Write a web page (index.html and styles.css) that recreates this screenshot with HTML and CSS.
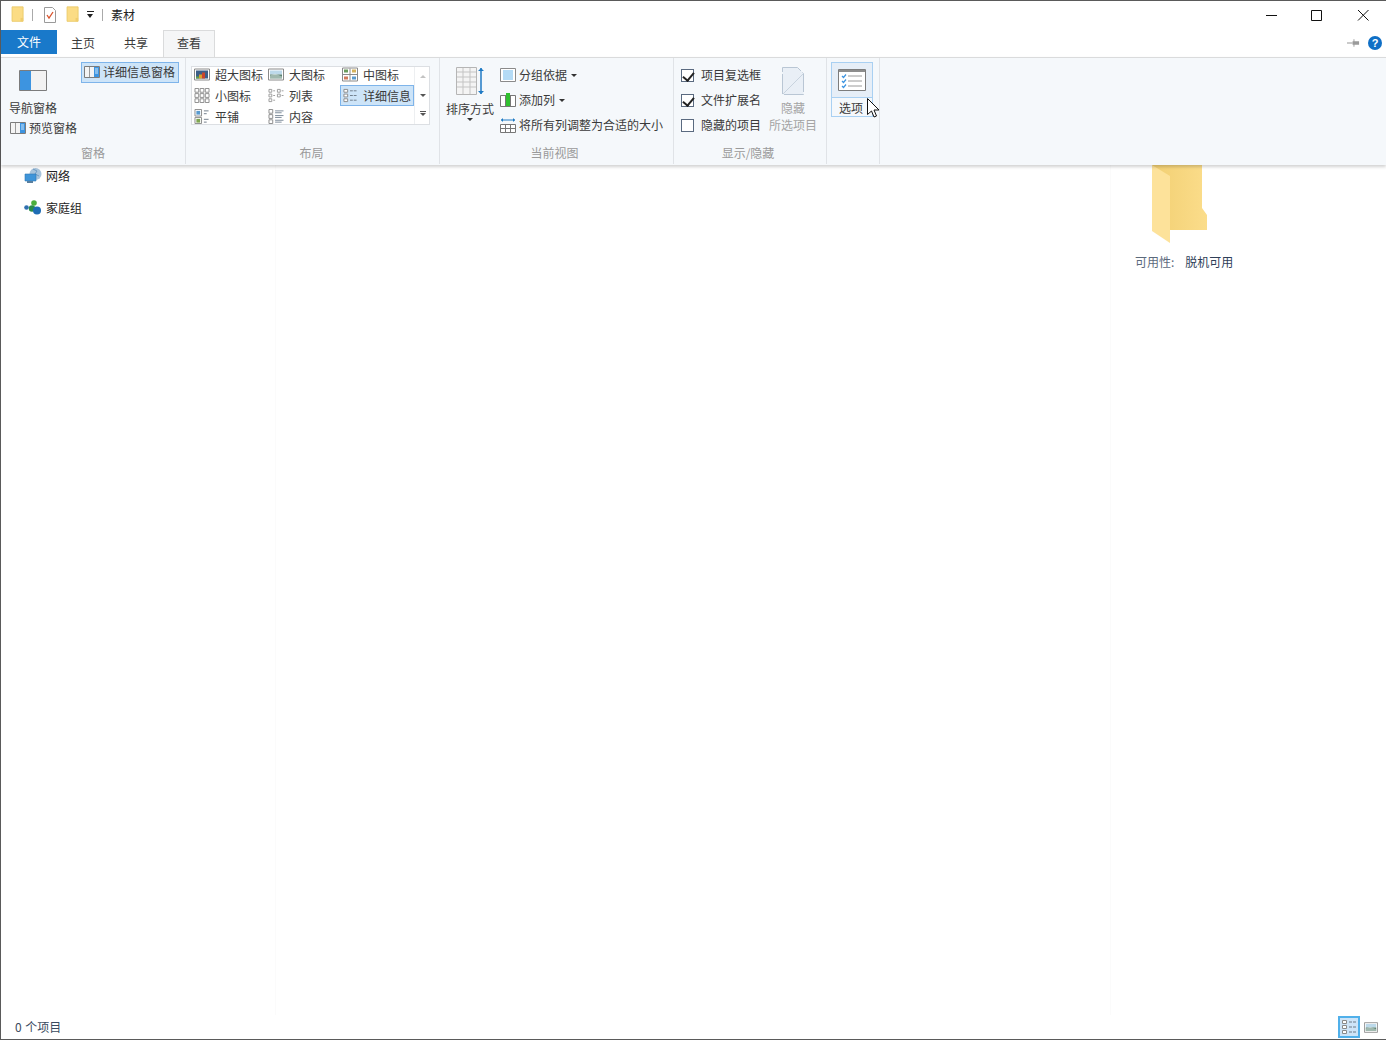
FILE: index.html
```html
<!DOCTYPE html>
<html lang="zh-CN">
<head>
<meta charset="UTF-8">
<title>素材</title>
<link rel="stylesheet" href="styles.css">
</head>
<body>
<svg class="defs" width="0" height="0">
	<defs>
		<symbol id="folder" viewBox="0 0 16 20">
			<path d="M1 1h13v17H1z" fill="#fbdc85" stroke="#e8c766"/>
			<path d="M11 14h3v4h-3z" fill="#f0cd6d"/>
		</symbol>
		<symbol id="details" viewBox="0 0 16 16">
			<g fill="#fff" stroke="#8a8a8a"><path d="M1.500 1.500h4v3h-4zM1.500 6.500h4v3h-4zM1.500 11.500h4v3h-4z"/></g>
			<path d="M8 3h3M12 3h3M8 8h3M12 8h3M8 13h3M12 13h3" stroke="#6d7a88"/>
		</symbol>
		<symbol id="pane" viewBox="0 0 16 12">
			<path d="M.5.5h15v11H.5z" fill="#f4f4f4" stroke="#7c7c7c"/>
			<path d="M10 1h5v10h-5z" fill="#3d94e0"/>
			<path d="M5.500 1v10" stroke="#9a9a9a"/>
			<path d="M11 3h3M11 5h3M11 7h3" stroke="#cfe6fa"/>
		</symbol>
		<symbol id="thumb" viewBox="0 0 16 12">
			<path d="M.5.5h15v11H.5z" fill="#fff" stroke="#8a8a8a"/>
			<path d="M2 2h12v4H2z" fill="#bcd9ea"/>
			<path d="M2 6h12v4H2z" fill="#5b8272"/>
			<path d="M2 7l5-2 7 3v2H2z" fill="#e4eee9" opacity=".5"/>
		</symbol>
		<symbol id="xlarge" viewBox="0 0 16 12">
			<path d="M.5.5h15v11H.5z" fill="#fff" stroke="#8a8a8a"/>
			<path d="M2 2h12v8H2z" fill="#3d5f88"/>
			<path d="M5 10V6h3v4z" fill="#d8a12c"/>
			<path d="M8 10V4h3v6z" fill="#c9442f"/>
			<path d="M2 8h3v2H2z" fill="#5fa04a"/>
		</symbol>
		<symbol id="grid" viewBox="0 0 16 16">
			<g fill="#fff" stroke="#8a8a8a">
				<path d="M.5.5h4v4h-4zM6 .5h4v4H6zM11.500.5h4v4h-4zM.5 6h4v4h-4zM6 6h4v4H6zM11.500 6h4v4h-4zM.5 11.500h4v4h-4zM6 11.500h4v4H6zM11.500 11.500h4v4h-4z"/>
			</g>
		</symbol>
		<symbol id="list" viewBox="0 0 16 16">
			<g fill="#fff" stroke="#9a9a9a">
				<path d="M.5 1.500h3v3h-3zM.5 6.500h3v3h-3zM.5 11.500h3v3h-3zM9.500 1.500h3v3h-3zM9.500 6.500h3v3h-3z"/>
			</g>
			<path d="M5 3h2M5 8h2M5 13h2M14 3h2M14 8h2" stroke="#9a9a9a"/>
		</symbol>
		<symbol id="tiles" viewBox="0 0 16 16">
			<path d="M.5.5h7v7h-7zM.5 9h7v6.500h-7z" fill="#fff" stroke="#8a8a8a"/>
			<path d="M2 2h4v4H2z" fill="#5a9bcf"/>
			<path d="M2 10.500h4v4H2z" fill="#7fa650"/>
			<path d="M10 2h5M10 5h3M10 11h5M10 14h3" stroke="#6d7a88"/>
		</symbol>
		<symbol id="content" viewBox="0 0 16 16">
			<path d="M.5.5h4v4h-4zM.5 6h4v4h-4zM.5 11.500h4v4h-4z" fill="#fff" stroke="#8a8a8a"/>
			<path d="M7 2h9M7 4h7M7 7h9M7 9h7M7 12h9M7 14h7" stroke="#7a8796"/>
		</symbol>
		<symbol id="medium" viewBox="0 0 16 14">
			<path d="M.5.5h15v13H.5z" fill="#fff" stroke="#8a8a8a"/>
			<path d="M8 1v12M1 7h14" stroke="#8a8a8a"/>
			<path d="M2 2h4v3H2z" fill="#6a9c5c"/>
			<path d="M10 2h4v3h-4z" fill="#d5b25c"/>
			<path d="M2 9h4v3H2z" fill="#d07a5c"/>
			<path d="M10 9h4v3h-4z" fill="#5a9bcf"/>
		</symbol>
	</defs>
</svg>

<div class="window">
	<div class="titlebar">
		<svg class="qa-folder"><use href="#folder"/></svg>
		<span class="qa-sep"></span>
		<svg class="qa-props" viewBox="0 0 12 16">
			<path d="M.5.5h8l3 3v12H.5z" fill="#fff" stroke="#9a9a9a"/>
			<path d="M3 8l2 3 4-6" fill="none" stroke="#d9532c" stroke-width="1.300"/>
		</svg>
		<svg class="qa-folder second"><use href="#folder"/></svg>
		<span class="qa-drop"></span>
		<span class="qa-sep last"></span>
		<span class="title">素材</span>
		<div class="win-btns">
			<svg viewBox="0 0 46 30"><path d="M18 15.500h11" stroke="#111"/></svg>
			<svg viewBox="0 0 46 30"><path d="M17.500 10.500h10v10h-10z" fill="none" stroke="#111"/></svg>
			<svg viewBox="0 0 46 30"><path d="M18 10l10.500 10.500M28.500 10L18 20.500" stroke="#111"/></svg>
		</div>
	</div>

	<div class="tabs">
		<div class="tab file">文件</div>
		<div class="tab">主页</div>
		<div class="tab">共享</div>
		<div class="tab active">查看</div>
		<div class="tab-tools">
			<svg class="pin" viewBox="0 0 14 8"><path d="M0 4h6" stroke="#8f8f8f"/><path d="M6 2h1V0h1v2h5v4H8v2H7V6H6z" fill="#9a9a9a"/></svg>
			<span class="help">?</span>
		</div>
	</div>

	<div class="ribbon">
		<section class="group pane-group">
			<div class="group-body">
				<div class="pane-col">
					<div class="big-btn nav-btn">
						<svg class="nav-icon" viewBox="0 0 28 21">
							<path d="M.5.500h27v20H.5z" fill="#f2f2f2" stroke="#7c7c7c"/>
							<path d="M1 1h11v19H1z" fill="#3d94e0"/>
						</svg>
						<span>导航窗格</span>
					</div>
					<div class="small-row"><svg class="ic16"><use href="#pane"/></svg>预览窗格</div>
				</div>
				<div class="detail-pane"><svg class="ic16"><use href="#pane"/></svg>详细信息窗格</div>
			</div>
			<div class="group-label">窗格</div>
		</section>

		<section class="group layout-group">
			<div class="group-body">
				<div class="gallery">
					<div class="gallery-items">
						<div class="g-item"><svg><use href="#xlarge"/></svg>超大图标</div>
						<div class="g-item"><svg><use href="#thumb"/></svg>大图标</div>
						<div class="g-item"><svg><use href="#medium"/></svg>中图标</div>
						<div class="g-item"><svg><use href="#grid"/></svg>小图标</div>
						<div class="g-item"><svg><use href="#list"/></svg>列表</div>
						<div class="g-item selected"><svg><use href="#details"/></svg>详细信息</div>
						<div class="g-item"><svg><use href="#tiles"/></svg>平铺</div>
						<div class="g-item"><svg><use href="#content"/></svg>内容</div>
					</div>
					<div class="gallery-scroll">
						<span class="arrow up"></span>
						<span class="arrow down"></span>
						<span class="arrow more"></span>
					</div>
				</div>
			</div>
			<div class="group-label">布局</div>
		</section>

		<section class="group view-group">
			<div class="group-body">
				<div class="big-btn sort-btn">
					<svg class="sort-icon" viewBox="0 0 28 28">
						<path d="M.5.500h20v27H.5z" fill="#f4f4f4" stroke="#b5b5b5"/>
						<path d="M1 5h19M1 10h19M1 15h19M1 20h19M7 1v26M14 1v26" stroke="#c4c4c4"/>
						<path d="M25 1v26" stroke="#1f7ac4" stroke-width="1.500"/>
						<path d="M22 4l3-3 3 3zM22 24l3 3 3-3z" fill="#1f7ac4"/>
					</svg>
					<span>排序方式</span>
					<span class="caret"></span>
				</div>
				<div class="view-col">
					<div class="small-row">
						<svg class="ic16" viewBox="0 0 16 16"><path d="M.5 1.500h15v13H.5z" fill="#fff" stroke="#8a8a8a"/><path d="M3 3h10v10H3z" fill="#b4dbf6"/></svg>
						分组依据<span class="caret"></span>
					</div>
					<div class="small-row">
						<svg class="ic16" viewBox="0 0 16 16"><path d="M.5 3.500h15v11H.5z" fill="#fff" stroke="#777"/><path d="M5.500 4v10M10.500 4v10" stroke="#777"/><path d="M6 1h4v13H6z" fill="#2fc02f"/></svg>
						添加列<span class="caret"></span>
					</div>
					<div class="small-row">
						<svg class="ic16" viewBox="0 0 16 16"><path d="M.5 7.500h15v8H.5zM.5 11.500h15M5.500 8v7M10.500 8v7" fill="#fff" stroke="#777"/><path d="M1 3h14" stroke="#1f7ac4"/><path d="M1 3l2-2v4zM15 3l-2-2v4z" fill="#1f7ac4"/></svg>
						将所有列调整为合适的大小
					</div>
				</div>
			</div>
			<div class="group-label">当前视图</div>
		</section>

		<section class="group show-group">
			<div class="group-body">
				<div class="check-col">
					<label class="check-row"><span class="box on"></span>项目复选框</label>
					<label class="check-row"><span class="box on"></span>文件扩展名</label>
					<label class="check-row"><span class="box"></span>隐藏的项目</label>
				</div>
				<div class="big-btn hide-btn">
					<svg class="hide-icon" viewBox="0 0 22 28">
						<path d="M.5.500h15l6 6v21H.5z" fill="#e9eff6" stroke="#b9c6d4" stroke-dasharray="20 2"/>
						<path d="M1 27L21 7" stroke="#c8d3de"/>
					</svg>
					<span>隐藏</span>
					<span>所选项目</span>
				</div>
			</div>
			<div class="group-label">显示/隐藏</div>
		</section>

		<section class="group options-group">
			<div class="options-btn">
				<div class="options-top">
					<svg viewBox="0 0 28 22">
						<path d="M.5.500h27v21H.5z" fill="#fff" stroke="#7c7c7c"/>
						<path d="M1 1h26v2H1z" fill="#8d8d8d"/>
						<path d="M10 7h14M10 12h14M10 17h14" stroke="#9a9a9a"/>
						<path d="M4 7l1.500 1.500L8 5.500M4 12l1.500 1.500L8 10.500M4 17l1.500 1.500L8 15.500" fill="none" stroke="#3d94e0" stroke-width="1.200"/>
					</svg>
				</div>
				<div class="options-label">选项</div>
			</div>
		</section>
	</div>

	<div class="main">
		<div class="nav">
			<div class="nav-item">
				<svg viewBox="0 0 18 16">
					<circle cx="11.500" cy="6" r="6" fill="#a8c4dc"/>
					<path d="M9 1l4 2-2 3 4 2" fill="none" stroke="#6f9cc4"/>
					<path d="M1 6h11v7H1z" fill="#3f95d9" stroke="#2f78b5" stroke-width=".6"/>
					<path d="M3 13h6v2H3z" fill="#5a7f9e"/>
				</svg>
				网络
			</div>
			<div class="nav-item">
				<svg viewBox="0 0 18 16">
					<circle cx="2.500" cy="7.500" r="2.300" fill="#2f6fb0"/>
					<circle cx="10" cy="3" r="2.800" fill="#4caf3c"/>
					<circle cx="8" cy="8.500" r="3.200" fill="#2a8c4a"/>
					<circle cx="13" cy="10.500" r="4" fill="#1f6db5"/>
				</svg>
				家庭组
			</div>
		</div>
		<div class="files"></div>
		<div class="info">
			<svg class="big-folder" viewBox="0 0 56 78">
				<defs>
					<linearGradient id="fback" x1="0" x2="1" y1="0" y2="0">
						<stop offset="0" stop-color="#f2cf72"/>
						<stop offset="1" stop-color="#fbdd8b"/>
					</linearGradient>
				</defs>
				<path d="M0 0h50v43l5 7v15H18z" fill="url(#fback)"/>
				<path d="M0 0l18 11v67L0 66z" fill="#fde29a"/>
			</svg>
			<div class="avail"><span>可用性:</span><span class="avail-val">脱机可用</span></div>
		</div>
	</div>

	<div class="status">
		<span>0 个项目</span>
		<div class="status-views">
			<span class="view-btn on"><svg><use href="#details"/></svg></span>
			<span class="view-btn"><svg><use href="#thumb"/></svg></span>
		</div>
	</div>
</div>

<svg class="cursor" viewBox="0 0 13 20">
	<path d="M.5.500v16l4-3.500 2.500 6 2.500-1-2.500-6h5z" fill="#fff" stroke="#111"/>
</svg>
</body>
</html>
```

FILE: styles.css
```css
* {
	margin: 0;
	padding: 0;
	box-sizing: border-box;
}
html, body {
	height: 100%;
	overflow: hidden;
	background: #fff;
}
body {
	font-family: "Noto Sans CJK SC", "Noto Sans", sans-serif;
	font-size: 12px;
	line-height: 16px;
	color: #3a3a3a;
}
svg {
	display: block;
	flex: none;
}
.defs {
	position: absolute;
}
.window {
	height: 1040px;
	border: 1px solid #5a5a5a;
	border-right: none;
	display: flex;
	flex-direction: column;
}

/* titlebar */
.titlebar {
	height: 29px;
	display: flex;
	align-items: center;
	padding: 0 0 2px 10px;
	flex: none;
}
.qa-folder {
	width: 14px;
	height: 17px;
}
.qa-folder.second {
	margin-left: 10px;
}
.qa-sep {
	width: 1px;
	height: 12px;
	background: #aaa;
	margin: 0 11px 0 7px;
}
.qa-sep.last {
	margin: 0 7px 0 8px;
}
.qa-props {
	width: 12px;
	height: 16px;
}
.qa-drop {
	width: 7px;
	height: 7px;
	margin-left: 7px;
	border-top: 1px solid #222;
	position: relative;
}
.qa-drop::after {
	content: "";
	position: absolute;
	left: 0;
	top: 2px;
	border: 3.500px solid transparent;
	border-top: 4px solid #222;
	border-bottom: none;
}
.title {
	color: #222;
	margin-left: 1px;
}
.win-btns {
	margin-left: auto;
	display: flex;
}
.win-btns svg {
	width: 46px;
	height: 30px;
}

/* tabs */
.tabs {
	height: 27px;
	display: flex;
	flex: none;
	position: relative;
	z-index: 1;
}
.tab {
	height: 27px;
	width: 52px;
	text-align: center;
	padding-top: 5px;
	margin-left: 1px;
}
.tab:nth-child(2) {
	margin-left: 0;
}
.tab.file {
	width: 56px;
	height: 24px;
	margin-left: 0;
	padding-top: 4px;
	background: #1979ca;
	color: #fff;
}
.tab.active {
	background: #f5f6f7;
	border: 1px solid #dadbdc;
	border-bottom: none;
	padding-top: 4px;
}
.tab-tools {
	margin-left: auto;
	display: flex;
	align-items: center;
	padding: 0 4px 1px 0;
	gap: 8px;
}
.pin {
	width: 13px;
	height: 8px;
}
.help {
	width: 14px;
	height: 14px;
	border-radius: 50%;
	background: #0f6fc6;
	color: #fff;
	font: bold 11px/14px "Liberation Sans", sans-serif;
	text-align: center;
}

/* ribbon */
.ribbon {
	height: 108px;
	flex: none;
	display: flex;
	background: #f5f8fb;
	border-top: 1px solid #dadbdc;
	box-shadow: 0 2px 3px rgba(0, 0, 0, 0.18);
	position: relative;
	padding-bottom: 1px;
}
.group {
	border-right: 1px solid #e0e3e7;
	display: flex;
	flex-direction: column;
	height: 106px;
}
.group-body {
	flex: 1;
	display: flex;
}
.group-label {
	height: 20px;
	text-align: center;
	color: #9a9a9a;
	line-height: 17px;
}
.layout-group .group-label {
	padding-right: 2px;
}
.view-group .group-label,
.show-group .group-label {
	padding-right: 4px;
}
.big-btn {
	display: flex;
	flex-direction: column;
	align-items: center;
}
.small-row {
	display: flex;
	align-items: center;
	gap: 3px;
	height: 16px;
	white-space: nowrap;
}
.ic16 {
	width: 16px;
	height: 16px;
}
.caret {
	width: 0;
	height: 0;
	border: 3px solid transparent;
	border-top: 3px solid #333;
	border-bottom: none;
	margin-left: 1px;
}

.pane-group {
	width: 185px;
}
.pane-group .group-body {
	padding: 4px 0 0 8px;
}
.pane-col {
	width: 72px;
}
.nav-btn {
	width: 48px;
	padding-top: 8px;
}
.nav-icon {
	width: 28px;
	height: 21px;
	margin-bottom: 9px;
}
.pane-col .small-row {
	margin: 4px 0 0 1px;
}
.detail-pane {
	width: 98px;
	height: 21px;
	display: flex;
	align-items: center;
	gap: 3px;
	padding: 0 0 2px 2px;
	background: #cde4f8;
	border: 1px solid #7eb4ea;
	white-space: nowrap;
}

.layout-group {
	width: 254px;
}
.layout-group .group-body {
	padding: 8px 0 0 5px;
}
.gallery {
	width: 239px;
	height: 59px;
	display: flex;
	background: #fff;
	border: 1px solid #dcdfe3;
}
.gallery-items {
	width: 222px;
	display: grid;
	grid-template-columns: repeat(3, 74px);
	grid-auto-rows: 21px;
	margin-top: -3px;
}
.g-item {
	display: flex;
	align-items: center;
	gap: 5px;
	padding-left: 2px;
	white-space: nowrap;
	height: 21px;
}
.g-item svg {
	width: 16px;
	height: 15px;
}
.g-item.selected {
	background: #cde4f8;
	border: 1px solid #7eb4ea;
	padding-left: 1px;
}
.gallery-scroll {
	flex: 1;
	display: flex;
	flex-direction: column;
	align-items: center;
	border-left: 1px solid #edeff1;
}
.arrow {
	height: 19px;
	width: 100%;
	position: relative;
}
.arrow::after {
	content: "";
	position: absolute;
	left: 5px;
	top: 8px;
	border: 3px solid transparent;
}
.arrow.up::after {
	border-bottom: 3px solid #c3c3c3;
	border-top: none;
}
.arrow.down::after {
	border-top: 3px solid #555;
	border-bottom: none;
}
.arrow.more::before {
	content: "";
	position: absolute;
	left: 5px;
	top: 6px;
	width: 6px;
	height: 1px;
	background: #555;
}
.arrow.more::after {
	border-top: 3px solid #555;
	border-bottom: none;
}

.view-group {
	width: 234px;
}
.view-group .group-body {
	padding: 9px 0 0 5px;
	gap: 5px;
}
.sort-btn {
	width: 50px;
}
.sort-icon {
	width: 28px;
	height: 28px;
	margin-bottom: 6px;
}
.sort-btn .caret {
	margin: 1px 0 0;
}
.view-col {
	display: flex;
	flex-direction: column;
	gap: 9px;
}

.show-group {
	width: 153px;
}
.show-group .group-body {
	padding: 9px 0 0 7px;
}
.check-col {
	display: flex;
	flex-direction: column;
	gap: 9px;
	width: 88px;
}
.check-row {
	display: flex;
	align-items: center;
	gap: 7px;
	height: 16px;
	white-space: nowrap;
}
.box {
	width: 13px;
	height: 13px;
	border: 1px solid #5a6a80;
	background: #fff;
	position: relative;
}
.box.on::after {
	content: "";
	position: absolute;
	left: 3px;
	top: 0;
	width: 5px;
	height: 9px;
	border: solid #222;
	border-width: 0 2px 2px 0;
	transform: rotate(40deg);
}
.hide-btn {
	width: 48px;
	color: #a4a4a4;
	line-height: 17px;
}
.hide-icon {
	width: 22px;
	height: 28px;
	margin-bottom: 4px;
}

.options-group {
	width: 53px;
	padding: 4px 0 0 4px;
}
.options-btn {
	width: 42px;
	height: 55px;
	border: 1px solid #a9d0f2;
	background: #fff;
	display: flex;
	flex-direction: column;
}
.options-top {
	height: 35px;
	background: #e6eef7;
	display: flex;
	justify-content: center;
	padding-top: 6px;
	border-bottom: 1px solid #a9d0f2;
}
.options-top svg {
	width: 28px;
	height: 22px;
}
.options-label {
	padding: 2px 2px 0 0;
	text-align: center;
	background: #f5f8fb;
	flex: 1;
}

/* main */
.main {
	flex: 1;
	display: flex;
	min-height: 0;
}
.nav {
	width: 275px;
	border-right: 1px solid #fbfbfb;
	padding: 3px 0 0 23px;
	display: flex;
	flex-direction: column;
	gap: 16px;
}
.nav-item {
	display: flex;
	align-items: center;
	gap: 4px;
	height: 16px;
	color: #222;
}
.nav-item svg {
	width: 18px;
	height: 16px;
}
.files {
	flex: 1;
	border-right: 1px solid #fbfbfb;
}
.info {
	width: 275px;
	display: flex;
	flex-direction: column;
	padding-left: 24px;
}
.big-folder {
	width: 56px;
	height: 78px;
	margin-left: 17px;
}
.avail {
	display: flex;
	gap: 11px;
	margin-top: 11px;
	color: #5c6a7c;
}
.avail-val {
	color: #2f3f58;
}

/* status */
.status {
	height: 24px;
	flex: none;
	display: flex;
	align-items: center;
	padding: 0 8px 0 14px;
	color: #3a4a60;
	word-spacing: 1px;
}
.status-views {
	margin-left: auto;
	display: flex;
	align-items: center;
	gap: 4px;
}
.view-btn {
	width: 14px;
	height: 22px;
	display: flex;
	align-items: center;
	justify-content: center;
}
.view-btn svg {
	width: 14px;
	height: 11px;
}
.view-btn.on {
	width: 22px;
	background: #cde4f8;
	border: 2px solid #50b0ea;
}
.view-btn.on svg {
	width: 16px;
	height: 16px;
}

.cursor {
	position: absolute;
	left: 867px;
	top: 98px;
	width: 13px;
	height: 20px;
}
```
